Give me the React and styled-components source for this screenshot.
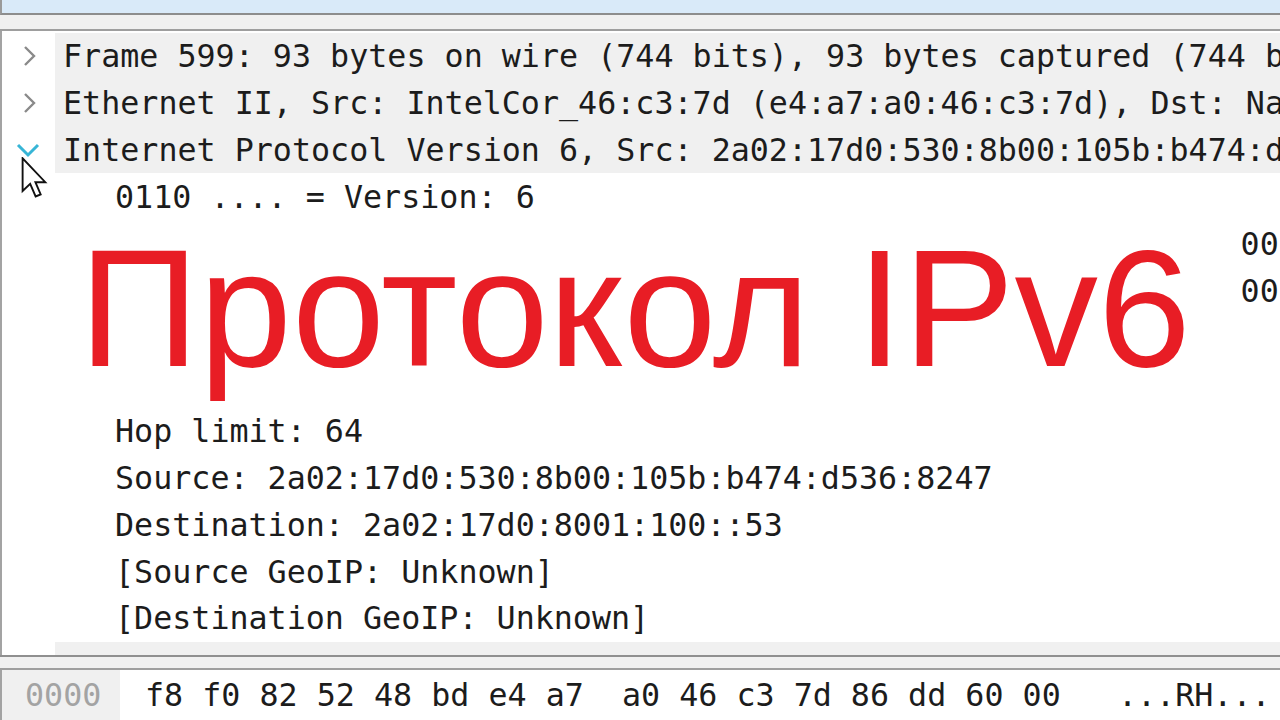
import styled, { createGlobalStyle } from "styled-components";

const GlobalStyle = createGlobalStyle`
    html, body {
        margin: 0;
        padding: 0;
        background: #ffffff;
        overflow: hidden;
    }
`;

const ROW_H = 46.83;
const MONO = `"DejaVu Sans Mono", "Liberation Mono", monospace`;

const Screen = styled.div`
    width: 1280px;
    height: 720px;
    display: flex;
    flex-direction: column;
    overflow: hidden;
    background: #ffffff;
    font-family: ${MONO};
`;

const PacketList = styled.div`
    height: 13px;
    flex: none;
    background: #d9eaf9;
    border-left: 2px solid #9a9a9a;
    border-bottom: 2px solid #8d8d8d;
`;

const Splitter = styled.div`
    height: ${(p) => p.$h}px;
    flex: none;
    background: #f0f0f0;
    border-top: ${(p) => (p.$top ? "2px solid #8f8f8f" : "none")};
    border-bottom: 2px solid #9e9e9e;
`;

const TreePane = styled.div`
    position: relative;
    height: 624px;
    flex: none;
    box-sizing: border-box;
    padding-top: 2px;
    border-left: 2px solid #a3a3a3;
    overflow: hidden;
`;

const Row = styled.div`
    display: flex;
    align-items: center;
    height: ${ROW_H}px;
`;

const Toggle = styled.div`
    width: 53px;
    height: 100%;
    flex: none;
    display: flex;
    align-items: center;
    padding-left: ${(p) => (p.$open ? 13 : 20)}px;
    box-sizing: border-box;
`;

const Label = styled.div`
    flex: 1;
    height: 100%;
    display: flex;
    align-items: center;
    padding-left: ${(p) => 8 + p.$level * 52}px;
    background: ${(p) => (p.$hl ? "#f0f0f0" : "transparent")};
    color: #1c1c1c;
    font-size: 31.7px;
    white-space: pre;
    overflow: hidden;
`;

const Cursor = styled.svg`
    position: absolute;
    left: 19px;
    top: 126px;
`;

const TitleCover = styled.div`
    position: absolute;
    left: 74px;
    top: 197px;
    width: 1164px;
    height: 182px;
    background: #ffffff;
`;

const Title = styled.h1`
    margin: 0;
    margin-top: -3px;
    padding-left: 3px;
    font-family: "Liberation Sans", Arial, sans-serif;
    font-weight: 400;
    font-size: 167px;
    line-height: 167px;
    color: #e81d25;
    white-space: nowrap;
`;

const HexPane = styled.div`
    flex: 1;
    display: flex;
    border-left: 2px solid #a3a3a3;
    font-size: 31.7px;
    white-space: pre;
`;

const Offset = styled.div`
    width: 118px;
    flex: none;
    display: flex;
    align-items: center;
    padding-left: 23px;
    box-sizing: border-box;
    background: #f0f0f0;
    color: #a3a3a3;
`;

const HexBytes = styled.div`
    display: flex;
    align-items: center;
    padding-left: 25px;
    color: #1c1c1c;
`;

const Chevron = ({ open }) =>
    open ? (
        <svg width="26" height="16" viewBox="0 0 26 16">
            <polyline
                points="3,3 13,13 23,3"
                fill="none"
                stroke="#37b5d6"
                strokeWidth="3"
            />
        </svg>
    ) : (
        <svg width="16" height="22" viewBox="0 0 16 22">
            <polyline
                points="3,2 12,11 3,20"
                fill="none"
                stroke="#8a8a8a"
                strokeWidth="2.4"
            />
        </svg>
    );

const rows = [
    {
        level: 0,
        toggle: "closed",
        hl: true,
        text: "Frame 599: 93 bytes on wire (744 bits), 93 bytes captured (744 bits) on interface 0",
    },
    {
        level: 0,
        toggle: "closed",
        hl: true,
        text: "Ethernet II, Src: IntelCor_46:c3:7d (e4:a7:a0:46:c3:7d), Dst: Nanjing_52:48:bd (f8:f0:82:52:48:bd)",
    },
    {
        level: 0,
        toggle: "open",
        hl: true,
        text: "Internet Protocol Version 6, Src: 2a02:17d0:530:8b00:105b:b474:d536:8247, Dst: 2a02:17d0:8001:100::53",
    },
    { level: 1, text: "0110 .... = Version: 6" },
    {
        level: 1,
        text: ".... 0000 0000 .... .... .... .... .... = Traffic class: 0x00 (DSCP: CS0, ECN: Not-ECT)",
    },
    {
        level: 1,
        text: ".... .... .... 0000 0000 0000 0000 0000 = Flow label: 0x00000",
    },
    { level: 1, text: "Payload length: 39" },
    { level: 1, text: "Next header: UDP (17)" },
    { level: 1, text: "Hop limit: 64" },
    { level: 1, text: "Source: 2a02:17d0:530:8b00:105b:b474:d536:8247" },
    { level: 1, text: "Destination: 2a02:17d0:8001:100::53" },
    { level: 1, text: "[Source GeoIP: Unknown]" },
    { level: 1, text: "[Destination GeoIP: Unknown]" },
    { level: 0, hl: true, text: "" },
];

export default function App() {
    return (
        <>
            <GlobalStyle />
            <Screen>
                <PacketList />
                <Splitter $h={14} />
                <TreePane>
                    {rows.map((r, i) => (
                        <Row key={i}>
                            <Toggle $open={r.toggle === "open"}>
                                {r.toggle ? (
                                    <Chevron open={r.toggle === "open"} />
                                ) : null}
                            </Toggle>
                            <Label $level={r.level} $hl={r.hl}>
                                {r.text}
                            </Label>
                        </Row>
                    ))}
                    <Cursor width="28" height="42" viewBox="0 0 13 20">
                        <path
                            d="M0.6,0.6 L0.6,16.2 L4.2,12.8 L6.8,18.8 L9.2,17.8 L6.7,12 L11.4,12 Z"
                            fill="#ffffff"
                            stroke="#111111"
                            strokeWidth="0.9"
                        />
                    </Cursor>
                    <TitleCover>
                        <Title>Протокол IPv6</Title>
                    </TitleCover>
                </TreePane>
                <Splitter $h={11} $top />
                <HexPane>
                    <Offset>0000</Offset>
                    <HexBytes>
                        {"f8 f0 82 52 48 bd e4 a7  a0 46 c3 7d 86 dd 60 00   ...RH..."}
                    </HexBytes>
                </HexPane>
            </Screen>
        </>
    );
}
